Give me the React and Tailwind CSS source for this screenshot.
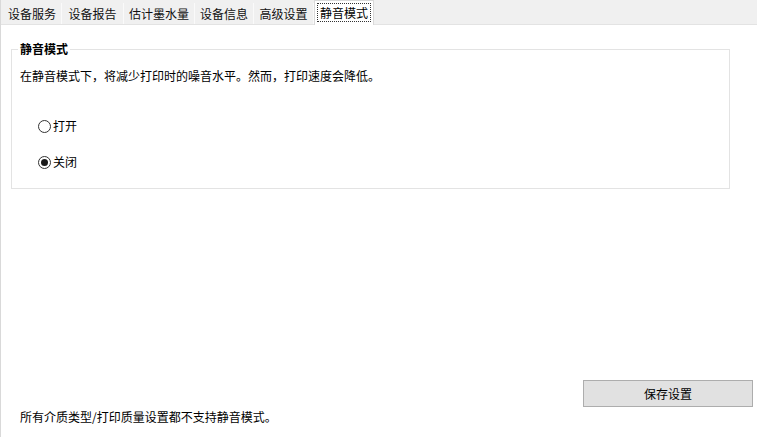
const tabs = [
  { label: '设备服务', w: 'w-[59px]' },
  { label: '设备报告', w: 'w-[62px]' },
  { label: '估计墨水量', w: 'w-[71px]' },
  { label: '设备信息', w: 'w-[59px]' },
  { label: '高级设置', w: 'w-[60px]' },
  { label: '静音模式', w: 'w-[60px]' },
]

function Radio({ checked }) {
  return (
    <span className="w-[13px] h-[13px] rounded-full border border-[#333] bg-white flex items-center justify-center mr-[1px]">
      {checked && <span className="w-[7px] h-[7px] rounded-full bg-[#1a1a1a]" />}
    </span>
  )
}

export default function App() {
  const font = { fontFamily: '"SimSun", "Noto Sans CJK SC", sans-serif' }
  return (
    <div className="w-[757px] h-[437px] bg-white text-[12px] text-black flex flex-col overflow-hidden border-l border-[#d9d9d9]" style={font}>
      <div className="h-[25px] bg-[#f0f0f0] border-b border-[#e3e3e3] flex items-end pl-[2px] shrink-0">
        {tabs.map(({ label, w }, i) => {
          const active = i === tabs.length - 1
          return active ? (
            <div key={label} className={`${w} h-[25px] -mb-px bg-white border border-b-0 border-[#d9d9d9] px-[2px] pt-[2px] flex`}>
              <div className="flex-1 h-[19px] border border-dotted border-[#333] flex items-center justify-center leading-none">{label}</div>
            </div>
          ) : (
            <div key={label} className={`${w} h-[21px] flex items-center justify-center border-r border-[#fafafa] leading-none text-[#111]`}>{label}</div>
          )
        })}
      </div>

      <div className="flex-1 flex flex-col pl-[10px] pr-[4px] pt-[24px] pb-[12px]">
        <div className="relative border border-[#e3e3e3] h-[140px] w-[719px] px-[8px] pt-[18px]">
          <div className="absolute -top-[9px] left-[6px] bg-white px-[2px] font-bold leading-[16px]">静音模式</div>
          <div className="leading-[16px]">在静音模式下，将减少打印时的噪音水平。然而，打印速度会降低。</div>
          <div className="flex flex-col gap-[20px] pl-[18px] mt-[34px]">
            <label className="flex items-center h-[16px] gap-[1px]"><Radio />打开</label>
            <label className="flex items-center h-[16px] gap-[1px]"><Radio checked />关闭</label>
          </div>
        </div>

        <div className="flex-1" />
        <div className="flex justify-end">
          <button className="w-[170px] h-[27px] bg-[#e1e1e1] border border-[#adadad] leading-none" style={font}>保存设置</button>
        </div>
        <div className="mt-[2px] pl-[9px] leading-[16px]">所有介质类型/打印质量设置都不支持静音模式。</div>
      </div>
    </div>
  )
}
